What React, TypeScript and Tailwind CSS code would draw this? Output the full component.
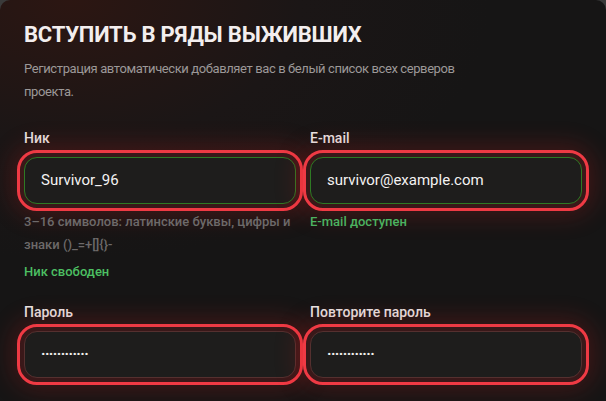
import React from "react";

interface FieldProps {
  label: string;
  value: string;
  secret?: boolean;
  valid?: boolean;
  hint?: string;
  status?: string;
}

const Field = ({ label, value, secret, valid, hint, status }: FieldProps) => {
  return (
    <div className="flex flex-col">
      <label className="text-[14px] leading-[20px] font-medium text-[#e8e4e4]">
        {label}
      </label>
      <div
        className={
          valid
            ? "mt-[9px] h-[47px] flex items-center rounded-[13px] border border-[#2e7a24] bg-[#1e1d1c] px-4 outline-[3px] outline-solid outline-[#ef3a44] outline-offset-[4px] shadow-[0_0_0_4px_#3a1819,0_0_24px_12px_rgba(200,30,30,0.24)]"
            : "mt-[9px] h-[47px] flex items-center rounded-[13px] border border-[#55302f] bg-[#1e1d1c] px-4 outline-[3px] outline-solid outline-[#ef3a44] outline-offset-[4px] shadow-[0_0_0_4px_#3a1819,0_0_24px_12px_rgba(200,30,30,0.24)]"
        }
      >
        {secret ? (
          <span className="text-[15px] font-bold text-[#f2f0f0] tracking-[-0.6px]">
            ············
          </span>
        ) : (
          <span className="text-[15px] text-[#f4f2f2]">{value}</span>
        )}
      </div>
      {hint && (
        <p className="mt-[7px] text-[13px] leading-[22.5px] font-medium text-[#6d6a6a]">
          {hint}
        </p>
      )}
      {status && (
        <p
          className={
            hint
              ? "mt-[5px] text-[13px] leading-[22px] font-medium text-[#4cbf62]"
              : "mt-[7px] text-[13px] leading-[22px] font-medium text-[#4cb260]"
          }
        >
          {status}
        </p>
      )}
    </div>
  );
};

export default function App() {
  return (
    <div className="w-[606px] h-[401px] overflow-hidden bg-[#3a3a3a] font-['Roboto','Noto_Sans',sans-serif]">
      <div className="relative h-full rounded-t-[10px] bg-[radial-gradient(ellipse_420px_260px_at_70px_0px,#2c1612_0%,#1b1616_55%,#161515_100%)] px-6 pt-[21px]">
        <h1 className="text-[22px] leading-[28px] font-bold tracking-[-0.2px] text-[#f3eeee]">
          ВСТУПИТЬ В РЯДЫ ВЫЖИВШИХ
        </h1>
        <p className="mt-[8px] max-w-[470px] text-[13px] leading-[23px] tracking-[-0.4px] text-[#9c9898]">
          Регистрация автоматически добавляет вас в белый список всех серверов
          проекта.
        </p>

        <div className="mt-[25px] grid grid-cols-2 gap-x-[14px] gap-y-[19px]">
          <Field
            label="Ник"
            value="Survivor_96"
            valid
            hint="3–16 символов: латинские буквы, цифры и знаки ()_=+[]{}-"
            status="Ник свободен"
          />
          <Field
            label="E-mail"
            value="survivor@example.com"
            valid
            status="E-mail доступен"
          />
          <Field label="Пароль" value="" secret />
          <Field label="Повторите пароль" value="" secret />
        </div>
      </div>
    </div>
  );
}
